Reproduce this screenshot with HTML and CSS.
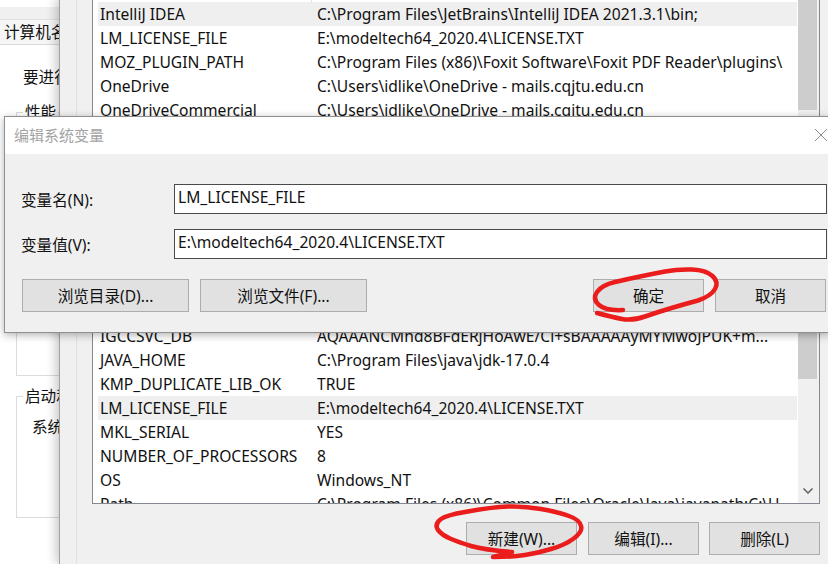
FILE: index.html
```html
<!DOCTYPE html>
<html lang="zh">
<head>
<meta charset="utf-8">
<title>编辑系统变量</title>
<link rel="stylesheet" href="styles.css">
</head>
<body>
<div class="desktop">
  <section class="win-back">
    <div class="tabstrip"><span class="tab">计算机名</span></div>
    <p class="back-text t1">要进行</p>
    <div class="group g1"><span class="legend">性能</span></div>
    <div class="group g2"><span class="legend">启动和</span><p class="back-text t2">系统</p></div>
  </section>

  <section class="win-mid">
    <div class="listbox">
      <div class="rows">
        <div class="row sel"><span class="k">IntelliJ IDEA</span><span class="v">C:\Program Files\JetBrains\IntelliJ IDEA 2021.3.1\bin;</span></div>
        <div class="row"><span class="k">LM_LICENSE_FILE</span><span class="v">E:\modeltech64_2020.4\LICENSE.TXT</span></div>
        <div class="row"><span class="k">MOZ_PLUGIN_PATH</span><span class="v">C:\Program Files (x86)\Foxit Software\Foxit PDF Reader\plugins\</span></div>
        <div class="row"><span class="k">OneDrive</span><span class="v">C:\Users\idlike\OneDrive - mails.cqjtu.edu.cn</span></div>
        <div class="row"><span class="k">OneDriveCommercial</span><span class="v">C:\Users\idlike\OneDrive - mails.cqjtu.edu.cn</span></div>
        <div class="gap"></div>
        <div class="row"><span class="k">IGCCSVC_DB</span><span class="v">AQAAANCMnd8BFdERjHoAwE/Cl+sBAAAAAyMYMwoJPUK+m...</span></div>
        <div class="row"><span class="k">JAVA_HOME</span><span class="v">C:\Program Files\java\jdk-17.0.4</span></div>
        <div class="row"><span class="k">KMP_DUPLICATE_LIB_OK</span><span class="v">TRUE</span></div>
        <div class="row sel"><span class="k">LM_LICENSE_FILE</span><span class="v">E:\modeltech64_2020.4\LICENSE.TXT</span></div>
        <div class="row"><span class="k">MKL_SERIAL</span><span class="v">YES</span></div>
        <div class="row"><span class="k">NUMBER_OF_PROCESSORS</span><span class="v">8</span></div>
        <div class="row"><span class="k">OS</span><span class="v">Windows_NT</span></div>
        <div class="row"><span class="k">Path</span><span class="v">C:\Program Files (x86)\Common Files\Oracle\Java\javapath;C:\U</span></div>
      </div>
      <div class="scrollbar">
        <div class="thumb t-top"></div>
        <div class="thumb t-low"></div>
        <svg class="arrow" width="10" height="6" viewBox="0 0 10 6"><path d="M.5.5 5 5 9.500.5" fill="none" stroke="#606060" stroke-width="1.500"/></svg>
      </div>
    </div>
    <div class="mid-actions">
      <button class="btn">新建(W)...</button>
      <button class="btn">编辑(I)...</button>
      <button class="btn tight">删除(L)</button>
    </div>
  </section>

  <section class="dialog">
    <header class="titlebar">
      <h1>编辑系统变量</h1>
      <svg class="close" width="14" height="14" viewBox="0 0 14 14"><path d="M1 1 13 13M13 1 1 13" stroke="#8c8c8c" stroke-width="1" fill="none"/></svg>
    </header>
    <div class="dialog-body">
      <div class="field"><label>变量名(N):</label><div class="input">LM_LICENSE_FILE</div></div>
      <div class="field"><label>变量值(V):</label><div class="input">E:\modeltech64_2020.4\LICENSE.TXT</div></div>
      <div class="dialog-actions">
        <div class="left-btns">
          <button class="btn wide">浏览目录(D)...</button>
          <button class="btn wide">浏览文件(F)...</button>
        </div>
        <div class="right-btns">
          <button class="btn">确定</button>
          <button class="btn">取消</button>
        </div>
      </div>
    </div>
  </section>

  <svg class="ink" width="828" height="564" viewBox="0 0 828 564">
    <path d="M623 310Q606 311 599 305Q592 299 597 292Q602 285 615 282Q628 279 640 276.500Q652 274 665 271.500Q678 269 692 269.500Q706 270 712.500 276Q719 282 715 289Q711 296 698 300.500Q685 304 671.500 308Q658 312 645 316.500Q632 321 622 319Q612 317 597 313"/>
    <path d="M512 552Q485 550 471 546Q458 542 450 538.500Q442 535 438 530Q434 524 441 519Q447 515 465 512Q492 507 508 506.500Q525 506 541 509Q558 512 569 516Q580 520 581 526Q583 532 573 539Q565 545 551 549Q538 553 525 555Q512 557 493 557L512 552"/>
  </svg>
</div>
</body>
</html>
```
FILE: styles.css
```css
* { box-sizing: border-box; }
html, body { margin: 0; padding: 0; }
body {
  width: 828px;
  height: 564px;
  overflow: hidden;
  font-family: "Noto Sans", "Noto Sans CJK SC", sans-serif;
  font-size: 15.600px;
  color: #111;
}
.desktop { position: relative; width: 828px; height: 564px; background: #fff; overflow: hidden; }

.win-back { position: absolute; left: 0; top: 0; width: 60px; height: 564px; background: #fff; overflow: hidden; }
.tabstrip { margin-top: 7px; padding-top: 12px; background: #f0f0f0; white-space: nowrap; }
.tab { display: block; height: 26px; padding-left: 4px; line-height: 24px; background: #f6f6f6; border-top: 1px solid #e2e2e2; border-bottom: 1px solid #d9d9d9; }
.back-text { margin: 0; white-space: nowrap; line-height: 20px; }
.t1 { position: absolute; left: 23px; top: 67px; }
.group { position: absolute; left: 16px; width: 60px; border: 1px solid #dcdcdc; }
.g1 { top: 112px; height: 264px; }
.g2 { top: 396px; height: 122px; }
.legend { position: absolute; left: 6px; top: -11px; padding: 0 2px; background: #fff; line-height: 20px; white-space: nowrap; }
.t2 { position: absolute; left: 15px; top: 20px; }

.win-mid { position: absolute; left: 59px; top: -2px; width: 769px; height: 566px; background: #f0f0f0; border-left: 1px solid #a0a0a0; box-shadow: -3px 0 10px rgba(0,0,0,.22); padding: 0 8px 0 32px; }
.win-mid::before { content: ""; position: absolute; left: 16px; top: 0; bottom: 0; width: 1px; background: #e0e0e0; }
.listbox { position: relative; display: flex; height: 506px; background: #fff; border: 1px solid #828790; border-top: 0; }
.listbox::before { content: ""; position: absolute; left: 218px; top: 0; width: 1px; height: 4px; background: #e5e5e5; }
.rows { flex: 1; min-width: 0; overflow: hidden; padding: 4px 0 0 5px; }
.row { display: flex; height: 24px; line-height: 24px; padding-left: 2px; white-space: nowrap; }
.row.sel { background: #efefef; }
.k { width: 217px; flex: none; }
.v { flex: 1; min-width: 0; overflow: hidden; }
.gap { height: 202px; }
.scrollbar { position: relative; width: 21px; margin-left: 1px; background: #f0f0f0; }
.thumb { position: absolute; left: 0; width: 19px; background: #cdcdcd; }
.t-top { top: 0; height: 112px; }
.t-low { top: 330px; height: 51px; }
.arrow { position: absolute; left: 5px; top: 490px; }

.btn { height: 33px; width: 111px; padding: 0; font: inherit; color: #111; background: #e1e1e1; border: 1px solid #adadad; border-radius: 0; }
.btn.tight { margin-left: -1px; }
.mid-actions { display: flex; justify-content: flex-end; gap: 11px; margin-top: 18px; }

.dialog { position: absolute; left: 4px; top: 116px; width: 826px; height: 217px; background: #f0f0f0; border: 1px solid #8f8f8f; border-right: 0; box-shadow: 0 2px 8px rgba(0,0,0,.3); }
.titlebar { position: relative; display: flex; align-items: center; height: 37px; background: #fff; padding: 0 0 2px 9px; }
.titlebar h1 { margin: 0; font-size: 15px; font-weight: 400; color: #a3a3a3; }
.close { position: absolute; left: 809px; top: 11px; }
.dialog-body { padding: 30px 1px 0 16px; }
.field { display: flex; align-items: center; height: 30px; margin-bottom: 15px; }
.field label { width: 153px; flex: none; }
.input { width: 653px; height: 30px; line-height: 25px; padding-left: 3px; background: #fff; border: 1px solid #4a4a4a; white-space: nowrap; }
.dialog-actions { display: flex; justify-content: space-between; margin-top: 20px; padding: 0 3px 0 1px; }
.left-btns, .right-btns { display: flex; gap: 11px; }
.btn.wide { width: 167px; }

.ink { position: absolute; left: 0; top: 0; pointer-events: none; }
.ink path { fill: none; stroke: #ea1c1c; stroke-width: 4.500; stroke-linecap: round; stroke-linejoin: round; }
```
